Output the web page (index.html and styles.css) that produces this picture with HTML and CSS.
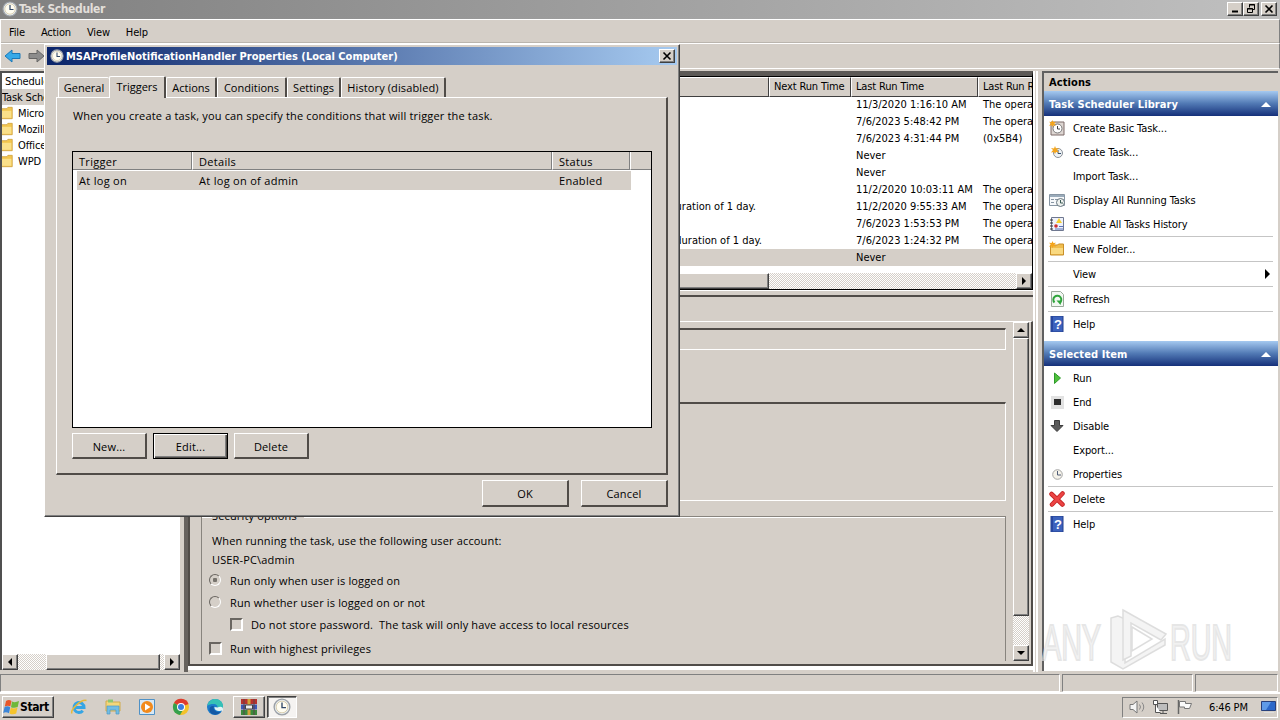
FILE: index.html
```html
<!DOCTYPE html>
<html lang="en">
<head>
    <meta charset="UTF-8">
    <meta name="viewport" content="width=device-width, initial-scale=1.0">
    <title>Task Scheduler</title>
    <link rel="stylesheet" href="styles.css">
</head>
<body>

<!-- Shared icons -->
<svg class="sprite" width="0" height="0">
    <symbol id="clock" viewBox="0 0 16 16">
        <circle cx="8" cy="8" r="7" fill="#e9eef2" stroke="#9ba0a6" stroke-width="1.2"/>
        <circle cx="8" cy="8" r="5.2" fill="#fffdf2" stroke="#c9b98c" stroke-width=".6"/>
        <path d="M8 4v4.500h3.500" fill="none" stroke="#2f4668" stroke-width="1.2"/>
    </symbol>
    <symbol id="folder" viewBox="0 0 16 16">
        <path d="M0 3h8l1-1.500h5v13H0z" fill="#f2c64f" stroke="#c99a32" stroke-width=".8"/>
        <path d="M0 5.500h13v8H0z" fill="#fae08a"/>
    </symbol>
    <symbol id="help" viewBox="0 0 16 16">
        <path d="M2 0h12v16H2z" fill="#3c62bd" stroke="#233f8c"/>
        <path d="M2 0h2v16H2z" fill="#2747a0"/>
        <text x="5" y="13" class="help-mark">?</text>
    </symbol>
    <symbol id="star" viewBox="0 0 8 8">
        <path d="M4 0l1 2.400L8 2 6 4l2 2.500L5 6 4 8 3 6 0 6.500 2 4 0 2l3 .4z" fill="#f4a51c"/>
    </symbol>
</svg>

<!-- Main window -->
<div class="window">
    <div class="title-bar">
        <svg class="icon"><use href="#clock"/></svg>
        <span class="title">Task Scheduler</span>
        <div class="win-buttons">
            <span class="win-btn"><svg width="12" height="10"><path d="M3 7.500h6" stroke="#000" stroke-width="2"/></svg></span>
            <span class="win-btn"><svg width="12" height="10"><path d="M4.500 3.500V.5h5v5h-2M4 1h6M2.500 4.500h5v4h-5zM2 5h6" fill="none" stroke="#000"/></svg></span>
            <span class="win-btn last"><svg width="12" height="10"><path d="M2.500 1.500l7 7M9.500 1.500l-7 7" stroke="#000" stroke-width="1.600"/></svg></span>
        </div>
    </div>

    <div class="menu-bar">
        <span>File</span><span>Action</span><span>View</span><span>Help</span>
    </div>

    <div class="tool-bar">
        <svg width="18" height="16"><path d="M1 8l7-6v3.500h8v5H8V14z" fill="#36a9e8" stroke="#1b78b8"/></svg>
        <svg width="18" height="16"><path d="M17 8l-7-6v3.500H2v5h8V14z" fill="#8c8c8c" stroke="#666"/></svg>
    </div>

    <div class="content">
        <!-- Folder tree -->
        <div class="tree">
            <div class="tree-rows">
                <div class="tree-row root">Scheduler</div>
                <div class="tree-row selected">Task Sche</div>
                <div class="tree-row"><svg class="icon"><use href="#folder"/></svg>Micro</div>
                <div class="tree-row"><svg class="icon"><use href="#folder"/></svg>Mozill</div>
                <div class="tree-row"><svg class="icon"><use href="#folder"/></svg>Office</div>
                <div class="tree-row"><svg class="icon"><use href="#folder"/></svg>WPD</div>
            </div>
            <div class="scroll-h">
                <span class="scroll-btn"><i class="arrow left"></i></span>
                <span class="thumb tree-thumb"></span>
                <span class="scroll-btn end"><i class="arrow right"></i></span>
            </div>
        </div>

        <!-- Task list and details -->
        <div class="middle">
            <div class="task-list">
                <div class="task-row head"><span></span><span>Next Run Time</span><span>Last Run Time</span><span>Last Run Result</span></div>
                <div class="task-row"><span></span><span></span><span>11/3/2020 1:16:10 AM</span><span>The operation</span></div>
                <div class="task-row"><span></span><span></span><span>7/6/2023 5:48:42 PM</span><span>The operation</span></div>
                <div class="task-row"><span></span><span></span><span>7/6/2023 4:31:44 PM</span><span>(0x5B4)</span></div>
                <div class="task-row"><span></span><span></span><span>Never</span><span></span></div>
                <div class="task-row"><span></span><span></span><span>Never</span><span></span></div>
                <div class="task-row"><span></span><span></span><span>11/2/2020 10:03:11 AM</span><span>The operation</span></div>
                <div class="task-row"><span class="trigger short">duration of 1 day.</span><span></span><span>11/2/2020 9:55:33 AM</span><span>The operation</span></div>
                <div class="task-row"><span></span><span></span><span>7/6/2023 1:53:53 PM</span><span>The operation</span></div>
                <div class="task-row"><span class="trigger">duration of 1 day.</span><span></span><span>7/6/2023 1:24:32 PM</span><span>The operation</span></div>
                <div class="task-row selected"><span></span><span></span><span>Never</span><span></span></div>
                <div class="scroll-h">
                    <span class="thumb list-thumb"></span>
                    <span class="scroll-btn end"><i class="arrow right"></i></span>
                </div>
            </div>

            <div class="details">
                <div class="details-page">
                    <div class="form">
                        <div class="group name-group"></div>
                        <div class="group desc-group"></div>
                        <div class="group security">
                            <div class="legend">Security options</div>
                            <div class="line">When running the task, use the following user account:</div>
                            <div class="line account">USER-PC\admin</div>
                            <div class="option"><i class="radio checked"></i>Run only when user is logged on</div>
                            <div class="option"><i class="radio"></i>Run whether user is logged on or not</div>
                            <div class="option nested"><i class="check"></i>Do not store password.&nbsp; The task will only have access to local resources</div>
                            <div class="option privileges"><i class="check"></i>Run with highest privileges</div>
                        </div>
                    </div>
                    <div class="scroll-v">
                        <span class="scroll-btn"><i class="arrow up"></i></span>
                        <span class="thumb details-thumb"></span>
                        <span class="scroll-btn end"><i class="arrow down"></i></span>
                    </div>
                </div>
            </div>
        </div>

        <!-- Actions pane -->
        <div class="actions">
            <div class="actions-title">Actions</div>
            <div class="actions-head">Task Scheduler Library<i class="arrow up"></i></div>
            <div class="action">
                <svg class="icon" viewBox="0 0 16 16"><path d="M2 2h13v13H2z" fill="#ddd6d2" stroke="#7d6b68"/><circle cx="8.500" cy="8.500" r="4.500" fill="#fff" stroke="#777"/><path d="M8.500 6v3H11" fill="none" stroke="#444"/><use href="#star" width="7" height="7"/></svg>
                Create Basic Task...
            </div>
            <div class="action">
                <svg class="icon" viewBox="0 0 16 16"><circle cx="9" cy="9" r="4.500" fill="#eef2f5" stroke="#8a9098"/><path d="M9 6v3.500h3" fill="none" stroke="#34506f"/><use href="#star" x="2" y="2" width="8" height="8"/></svg>
                Create Task...
            </div>
            <div class="action"><i class="icon"></i>Import Task...</div>
            <div class="action">
                <svg class="icon" viewBox="0 0 16 16"><path d="M.5 2.500h15v11H.5z" fill="#f6f8fa" stroke="#8795a3"/><path d="M1 3h14v2H1z" fill="#9aabba"/><path d="M2 7.500h3M6 7.500h4M2 10.500h3" stroke="#8795a3"/><circle cx="11.500" cy="10.500" r="4" fill="#eef1ee" stroke="#66757f"/><path d="M11.500 8v3H14" fill="none" stroke="#3a5a54"/></svg>
                Display All Running Tasks
            </div>
            <div class="action">
                <svg class="icon" viewBox="0 0 16 16"><path d="M2.500 1.500h12v13h-12z" fill="#eef1fa" stroke="#6f7890"/><path d="M1 4h3M1 7h3M1 10h3M1 13h3" stroke="#333"/><path d="M10 2l3 5H7z" fill="#f5cf2d"/><circle cx="7" cy="10" r="1.800" fill="#cf3030"/><path d="M10 10.500h4M6 13h8" stroke="#5b73b8"/></svg>
                Enable All Tasks History
            </div>
            <hr>
            <div class="action">
                <svg class="icon" viewBox="0 0 16 16"><path d="M1.500 4h7l1-1h5v11h-13z" fill="#f0bd4e" stroke="#c88f2a"/><path d="M2 7h12v6H2z" fill="#f9d980"/><use href="#star" width="7" height="7"/></svg>
                New Folder...
            </div>
            <hr>
            <div class="action"><i class="icon"></i>View<i class="arrow right"></i></div>
            <hr>
            <div class="action">
                <svg class="icon" viewBox="0 0 16 16"><path d="M2.500.5h9l3 3v12h-12z" fill="#f2f7f2" stroke="#9aa89a"/><path d="M5.500 11.500a4 4 0 1 1 5 .5" fill="none" stroke="#2ea43a" stroke-width="2"/><path d="M7.500 9.500l5 0-1 4.500z" fill="#2ea43a"/></svg>
                Refresh
            </div>
            <hr>
            <div class="action"><svg class="icon"><use href="#help"/></svg>Help</div>

            <div class="actions-head second">Selected Item<i class="arrow up"></i></div>
            <div class="action"><svg class="icon" viewBox="0 0 16 16"><path d="M5.500 3l6 5-6 5.500z" fill="#4fc03c" stroke="#2e9a2a"/></svg>Run</div>
            <div class="action"><svg class="icon" viewBox="0 0 16 16"><path d="M2 2h13v13H2z" fill="#e2e2e2"/><path d="M5 5h7v6H5z" fill="#2d2d2d"/></svg>End</div>
            <div class="action"><svg class="icon" viewBox="0 0 16 16"><path d="M5.500 2.500h5v5h3.500l-6 6-6-6h3.500z" fill="#5c5c5c" stroke="#3d3d3d"/></svg>Disable</div>
            <div class="action"><i class="icon"></i>Export...</div>
            <div class="action"><svg class="icon" viewBox="0 0 16 16"><circle cx="8.500" cy="8.500" r="4.800" fill="#f6f3ea" stroke="#a5a5a5"/><path d="M8.500 5v4H12" fill="none" stroke="#4f5c78"/></svg>Properties</div>
            <hr>
            <div class="action"><svg class="icon" viewBox="0 0 16 16"><path d="M2.500 3l11 10.500M13.500 2.500L3 13.500" stroke="#c42424" stroke-width="4.500" stroke-linecap="round"/><path d="M2.500 3L13.500 13.500M13.500 2.500L3 13.500" stroke="#ec4444" stroke-width="2.800" stroke-linecap="round"/></svg>Delete</div>
            <hr>
            <div class="action"><svg class="icon"><use href="#help"/></svg>Help</div>
        </div>
    </div>

    <div class="status-bar"><span></span><span></span><span></span></div>
</div>

<!-- Taskbar -->
<div class="taskbar">
    <div class="start">
        <svg width="17" height="16"><path d="M3 2q3-2 5.500 0L7.300 7.500Q5 6 1.800 7.500z" fill="#e8572a"/><path d="M9 2.500q3 1.500 7-.5l-1.300 6q-3.500 1.500-6.700.2z" fill="#6fb83a"/><path d="M1.600 8q3-1.500 5.600.3l-1.200 6q-3-2-5.800-.3z" fill="#3d86d8"/><path d="M7.800 8.800q3 1.500 6.700-.2l-1.300 6q-3.500 1.500-6.700-.2z" fill="#f6c42c"/></svg>
        Start
    </div>
    <div class="quick">
        <svg viewBox="0 0 18 18"><path d="M4.500 9.500h9.500a5 5 0 1 0-1.200 3.300" fill="none" stroke="#35a5e4" stroke-width="3"/><path d="M2 15.500C0 12 11 1 16.500 2.500" fill="none" stroke="#e6b93a" stroke-width="1.500"/></svg>
        <svg viewBox="0 0 18 18"><path d="M2 3h6l1 1h7v9H2z" fill="#f3d77a" stroke="#d1ab4a"/><path d="M4 1.500h5v3H4z" fill="#8cc672"/><path d="M3 8h12v8h-3v-4H6v4H3z" fill="#72bde3" stroke="#4a98c6" stroke-width=".7"/></svg>
        <svg viewBox="0 0 18 18"><path d="M1.500 1.500h15v15h-15z" fill="#d7e8f5" stroke="#4f91c6"/><circle cx="9" cy="9" r="6" fill="#f28a1c"/><path d="M7 5.500l5.500 3.500L7 12.500z" fill="#fff"/></svg>
        <svg viewBox="0 0 18 18"><circle cx="9" cy="9" r="8" fill="#f3c22b"/><path d="M9 9L2 5A8 8 0 0 1 16.500 6z" fill="#de3b2f"/><path d="M9 9L2 5a8 8 0 0 0 6 12l3.500-6z" fill="#35a04d"/><circle cx="9" cy="9" r="4" fill="#fff"/><circle cx="9" cy="9" r="3" fill="#3b7de0"/></svg>
        <svg viewBox="0 0 18 18"><circle cx="9" cy="9" r="8" fill="#1c7ccb"/><path d="M1.500 8C2 3 6 1 9 1c5 0 8 3.500 8 7 0 3-2 4.500-5 4-1.500-.3-1-1-.5-2 .5-2-1-4-4-4C5 6 2.500 6.500 1.500 8z" fill="#35c1b6"/><path d="M8 8c-1.500 3 1 6.500 6.500 6C11 18.500 4 17 3.500 12 3.300 9 5 7.500 8 8z" fill="#1459a5"/><path d="M8.500 9c-.5 3 3 5 7 3.500l1 1c2-5-2-5.500-5-4z" fill="#e3f3f5"/></svg>
    </div>
    <div class="task-btn">
        <svg viewBox="0 0 18 18"><path d="M1 1h16v5H1z" fill="#b8322e"/><path d="M1 6.500h16v5H1z" fill="#3b58b8"/><path d="M1 12h16v5H1z" fill="#3a8a3e"/><path d="M7.500 1h3v16h-3z" fill="#d0a43a"/><path d="M5.500 7h7v4h-7z" fill="#eee" stroke="#444"/><path d="M4 1v16M14 1v16" stroke="#5b4248"/></svg>
    </div>
    <div class="task-btn pressed"><svg viewBox="0 0 16 16"><use href="#clock"/></svg></div>
    <div class="tray">
        <svg width="18" height="16"><path d="M2 5.500h3L9 2v12L5 10.500H2z" fill="#f4f4f4" stroke="#777"/><path d="M11.500 5.500q2 2.500 0 5M14 3.500q3.500 4.500 0 9" fill="none" stroke="#888"/></svg>
        <svg width="18" height="16"><path d="M5.500 4.500h10v7h-10z" fill="#bdbdbd" stroke="#555"/><path d="M1.500 1.500h4v4h-4zM3.500 5.500v8h5M8 14.500h7M11 12v2" fill="#fff" stroke="#555"/></svg>
        <svg width="18" height="16"><path d="M2.500 1v14" stroke="#666" stroke-width="1.500"/><path d="M3.500 2.500h6v2h6l-2 5h-5v-1.500h-5z" fill="#fafafa" stroke="#777"/></svg>
        <span class="time">6:46 PM</span>
        <svg class="desktop" width="16" height="14"><path d="M.5 1.500h14v9H.5z" fill="#2c68c9" stroke="#27407c"/><path d="M1 2h9L5 10H1z" fill="#5f9be8"/><path d="M3 12.500h10" stroke="#ddd"/></svg>
    </div>
</div>

<!-- Properties dialog -->
<div class="dialog">
    <div class="dialog-title">
        <svg class="icon"><use href="#clock"/></svg>
        <span>MSAProfileNotificationHandler Properties (Local Computer)</span>
        <span class="win-btn"><svg width="12" height="10"><path d="M2.500 1.500l7 7M9.500 1.500l-7 7" stroke="#000" stroke-width="1.600"/></svg></span>
    </div>
    <div class="tabs">
        <span class="tab general">General</span>
        <span class="tab triggers active">Triggers</span>
        <span class="tab tab-actions">Actions</span>
        <span class="tab conditions">Conditions</span>
        <span class="tab settings">Settings</span>
        <span class="tab history">History (disabled)</span>
    </div>
    <div class="tab-page">
        <p>When you create a task, you can specify the conditions that will trigger the task.</p>
        <div class="triggers-table">
            <div class="trigger-row head"><span>Trigger</span><span>Details</span><span>Status</span><span></span></div>
            <div class="trigger-row"><span>At log on</span><span>At log on of admin</span><span>Enabled</span></div>
        </div>
        <div class="buttons">
            <span class="btn">New...</span>
            <span class="btn default">Edit...</span>
            <span class="btn">Delete</span>
        </div>
    </div>
    <div class="dialog-buttons">
        <span class="btn">OK</span>
        <span class="btn">Cancel</span>
    </div>
</div>

<!-- Watermark -->
<svg class="watermark" width="200" height="66">
    <g class="mark-text">
        <text x="3" y="53" textLength="59" lengthAdjust="spacingAndGlyphs">ANY</text>
        <text x="131" y="53" textLength="62" lengthAdjust="spacingAndGlyphs">RUN</text>
    </g>
    <g class="mark-logo">
        <path d="M79 9l-7 2v44l12 7 42-24v-6L86 56V12z"/>
        <path d="M84 3l43 24-5 6-30-17v33l-8 4z"/>
        <path class="mark-play" d="M93 20l20 12-20 12z"/>
    </g>
</svg>

</body>
</html>
```
FILE: styles.css
```css
/* General Styling */
* {
    box-sizing: border-box;
}

body {
    width: 1280px;
    height: 720px;
    margin: 0;
    overflow: hidden;
    background-color: #d5cfc8;
    color: #000;
    font-family: "DejaVu Sans Condensed", "DejaVu Sans", sans-serif;
    font-stretch: condensed;
    font-size: 11px;
    letter-spacing: -0.15px;
    white-space: nowrap;
}

svg {
    display: block;
    flex: none;
}

.sprite {
    display: none;
}

.icon {
    width: 16px;
    height: 16px;
    flex: none;
}

.help-mark {
    font: bold 13px "Liberation Sans", sans-serif;
    fill: #fff;
}

/* Main window */
.window {
    height: 693px;
    display: flex;
    flex-direction: column;
}

.title-bar {
    height: 19px;
    padding: 0 3px 1px 2px;
    display: flex;
    align-items: center;
    background: linear-gradient(to right, #808080, #c0c0c0);
}

.title {
    margin-left: 1px;
    flex: 1;
    color: #e2dfda;
    font-size: 12px;
    font-weight: bold;
    letter-spacing: -0.4px;
}

.win-buttons {
    display: flex;
}

.win-btn {
    width: 16px;
    height: 14px;
    display: flex;
    align-items: center;
    justify-content: center;
    background-color: #d5cfc8;
    border: 1px solid;
    border-color: #fff #404040 #404040 #fff;
    box-shadow: inset -1px -1px #808080;
}

.win-btn.last {
    margin-left: 2px;
}

.menu-bar {
    height: 25px;
    padding: 2px 0 0 8px;
    display: flex;
    align-items: center;
    gap: 16px;
    border: 1px solid #fff;
    border-right-color: #808080;
    box-shadow: inset 0 -1px #bab5ae;
}

.tool-bar {
    height: 25px;
    padding: 0 3px;
    display: flex;
    align-items: center;
    gap: 5px;
    border: 1px solid #fff;
    border-top: none;
    border-right-color: #808080;
}

.content {
    height: 603px;
    padding: 2px 2px 0 0;
    display: flex;
}

/* Scroll bars */
.scroll-h,
.scroll-v {
    display: flex;
    background: repeating-conic-gradient(#fff 0 25%, #d5cfc8 0 50%) 0 0 / 2px 2px;
}

.scroll-h {
    height: 16px;
}

.scroll-v {
    width: 16px;
    flex-direction: column;
}

.scroll-btn,
.thumb {
    background-color: #d5cfc8;
    border: 1px solid;
    border-color: #fff #404040 #404040 #fff;
    box-shadow: inset -1px -1px #808080;
}

.scroll-btn {
    width: 16px;
    height: 16px;
    display: flex;
    align-items: center;
    justify-content: center;
}

.scroll-h .end {
    margin-left: auto;
}

.scroll-v .end {
    margin-top: auto;
}

.tree-thumb {
    width: 114px;
    margin-left: 28px;
}

.list-thumb {
    width: 579px;
}

.details-thumb {
    height: 278px;
}

.arrow {
    border: 4px solid transparent;
}

.arrow.left {
    border-left-width: 0;
    border-right-color: #000;
}

.arrow.right {
    border-right-width: 0;
    border-left-color: #000;
}

.arrow.up {
    border-top-width: 0;
    border-bottom-color: #000;
}

.arrow.down {
    border-bottom-width: 0;
    border-top-color: #000;
}

/* Folder tree */
.tree {
    width: 181px;
    margin-bottom: 2px;
    display: flex;
    flex-direction: column;
    background-color: #fff;
    border: solid #505050;
    border-width: 2px 0 0 2px;
    border-right: 1px solid #d5cfc8;
}

.tree-rows {
    flex: 1;
    overflow: hidden;
}

.tree-row {
    height: 16px;
    display: flex;
    align-items: center;
    gap: 4px;
}

.tree-row .icon {
    width: 14px;
    margin-left: -2px;
}

.tree-row.root {
    padding-left: 3px;
}

.tree-row.selected,
.task-row.selected {
    background-color: #d5cfc8;
}

/* Task list */
.middle {
    width: 854px;
    margin-left: 3px;
    padding-bottom: 6px;
    display: flex;
    flex-direction: column;
    border-left: 4px solid #66625e;
    border-right: 5px double #fff;
}

.task-list {
    height: 219px;
    display: flex;
    flex-direction: column;
    background-color: #fff;
    border: 1px solid #000;
    border-top: 5px solid #5c5956;
    border-left: 2px solid #505050;
    box-shadow: inset 0 1px #000;
    padding-top: 1px;
    overflow: hidden;
}

.task-row {
    height: 17px;
    flex: none;
    display: grid;
    grid-template-columns: 579px 82px 127px 100px;
    align-items: center;
    letter-spacing: 0;
}

.task-row span {
    padding-left: 5px;
}

.task-row.head {
    height: 18px;
    align-items: stretch;
    margin-bottom: 1px;
    letter-spacing: -0.15px;
}

.task-row.head span {
    line-height: 18px;
    padding-left: 4px;
    background-color: #d5cfc8;
    border: 1px solid;
    border-color: #fff #404040 #404040 #fff;
}

.task-row .trigger {
    text-align: right;
    padding-right: 7px;
}

.task-row .short {
    padding-right: 13px;
}

.task-list .scroll-h {
    margin-top: auto;
}

/* Task details */
.details {
    flex: 1;
    margin: 5px 0 0 0;
    padding-top: 24px;
    border: 2px solid #504c48;
    border-right: none;
    box-shadow: 0 -4px #d5cfc8, 0 -5px #fff, 0 2px #fff, 0 4px #fff;
}

.details-page {
    height: 343px;
    padding: 0 2px 3px 11px;
    display: flex;
    justify-content: space-between;
    border-top: 1px solid #fff;
    border-right: 2px solid #504c48;
}

.form {
    width: 805px;
    padding-top: 6px;
    display: flex;
    flex-direction: column;
    overflow: hidden;
    font-family: "Open Sans", sans-serif;
    font-stretch: normal;
    letter-spacing: 0.15px;
}

.group {
    border: 1px solid #fff;
    border-top: 2px solid #504c48;
    flex: none;
}

.name-group {
    height: 22px;
}

.desc-group {
    height: 99px;
    margin-top: 52px;
}

.security {
    height: 150px;
    margin-top: 15px;
    padding-left: 10px;
    border: 1px solid #88847e;
    border-bottom: none;
    box-shadow: inset 0 1px #fff;
}

.legend {
    width: 92px;
    height: 14px;
    line-height: 14px;
    margin-top: -8px;
    background-color: #d5cfc8;
}

.line {
    height: 19px;
    line-height: 19px;
    margin-top: 8px;
}

.line.account {
    margin-top: 0;
}

.option {
    height: 22px;
    display: flex;
    align-items: center;
    gap: 8px;
}

.option.nested {
    padding-left: 21px;
    letter-spacing: 0.12px;
}

.option.privileges {
    margin-top: 2px;
}

.radio,
.check {
    width: 13px;
    height: 13px;
    border: 2px solid;
    border-color: #6a6661 #fff #fff #6a6661;
    margin-left: -3px;
}

.radio {
    border-width: 1px;
    width: 12px;
    height: 12px;
    border-radius: 50%;
    margin-right: 1px;
}

.radio.checked {
    background: radial-gradient(circle, #77736d 2px, transparent 2.5px);
}

/* Actions pane */
.actions {
    width: 236px;
    margin: 0 0 1px auto;
    background-color: #fff;
    border-left: 2px solid #606060;
    border-top: 2px solid #606060;
}

.actions-title {
    height: 18px;
    line-height: 20px;
    padding-left: 5px;
    background-color: #d5cfc8;
    font-weight: bold;
    letter-spacing: 0.1px;
}

.actions-head {
    height: 25px;
    padding: 1px 7px 0 5px;
    display: flex;
    align-items: center;
    justify-content: space-between;
    background: linear-gradient(#a5c9f0, #5179b4 50%, #15307a);
    color: #fff;
    font-weight: bold;
    letter-spacing: 0.1px;
}

.actions-head.second {
    margin-top: 5px;
}

.actions-head .arrow {
    border-width: 0 5px 5px;
    border-bottom-color: #fff;
}

.action {
    height: 24px;
    padding-left: 5px;
    display: flex;
    align-items: center;
    gap: 8px;
    letter-spacing: -0.1px;
}

.action .arrow {
    margin: 0 8px 0 auto;
    border-width: 5px 0 5px 5px;
}

.actions hr {
    height: 1px;
    margin: 0 5px 0 4px;
    border: none;
    background-color: #c5c5c5;
}

/* Status bar */
.status-bar {
    height: 21px;
    padding: 2px 2px 0 0;
    display: grid;
    grid-template-columns: 1060px 131px 83px;
    gap: 2px;
    border-bottom: 1px solid #fff;
}

.status-bar span {
    height: 18px;
    border: 1px solid;
    border-color: #808080 #fff #fff #808080;
}

/* Taskbar */
.taskbar {
    height: 27px;
    padding: 2px 2px 2px 2px;
    display: flex;
    align-items: center;
    border-top: 1px solid #fff;
}

.start {
    width: 52px;
    height: 22px;
    display: flex;
    align-items: center;
    border: 1px solid;
    border-color: #fff #404040 #404040 #fff;
    box-shadow: inset -1px -1px #808080;
    font-weight: bold;
    font-size: 12px;
    letter-spacing: -0.4px;
}

.quick {
    margin: 0 9px 0 16px;
    display: flex;
    gap: 16px;
}

.quick svg,
.task-btn svg {
    width: 18px;
    height: 18px;
}

.task-btn {
    width: 32px;
    height: 22px;
    display: flex;
    align-items: center;
    justify-content: center;
    border: 1px solid;
    border-color: #fff #404040 #404040 #fff;
    box-shadow: inset -1px -1px #808080;
}

.task-btn.pressed {
    width: 30px;
    margin-left: 2px;
    background-color: #f5f3f1;
    border-color: #404040 #fff #fff #404040;
    box-shadow: inset 1px 1px #808080;
}

.tray {
    width: 156px;
    height: 21px;
    margin-left: auto;
    padding-left: 5px;
    display: flex;
    align-items: center;
    gap: 6px;
    border: 1px solid;
    border-color: #808080 #fff #fff #808080;
}

.time {
    margin-left: 9px;
    flex: 1;
}

/* Properties dialog */
.dialog {
    position: absolute;
    left: 44px;
    top: 44px;
    width: 636px;
    height: 473px;
    padding: 2px;
    display: flex;
    flex-direction: column;
    background-color: #d5cfc8;
    border: 1px solid;
    border-color: #fff #404040 #404040 #fff;
    box-shadow: inset -1px -1px #808080;
    font-family: "Open Sans", sans-serif;
    font-stretch: normal;
    letter-spacing: 0.17px;
}

.dialog-title {
    height: 18px;
    padding: 0 2px 0 3px;
    display: flex;
    align-items: center;
    gap: 2px;
    background: linear-gradient(to right, #0a246a, #a6caf0);
    color: #fff;
    font-family: "DejaVu Sans Condensed", "DejaVu Sans", sans-serif;
    font-stretch: condensed;
    font-weight: bold;
    letter-spacing: 0;
}

.dialog-title .icon {
    width: 14px;
    height: 14px;
}

.dialog-title .win-btn {
    margin-left: auto;
}

.tabs {
    height: 22px;
    margin: 10px 0 0 11px;
    display: flex;
    align-items: flex-end;
    letter-spacing: 0;
}

.tab {
    height: 20px;
    line-height: 19px;
    text-align: center;
    border: solid;
    border-width: 1px 2px 0 1px;
    border-color: #fff #504c48 #fff #fff;
    border-radius: 2px 2px 0 0;
}

.tab.active {
    height: 22px;
    position: relative;
    top: 1px;
    background-color: #d5cfc8;
}

.general {
    width: 51px;
    border-right: none;
}

.triggers {
    width: 57px;
}

.tab-actions {
    width: 51px;
}

.conditions {
    width: 70px;
}

.settings {
    width: 54px;
}

.history {
    width: 105px;
    letter-spacing: 0.12px;
}

.tab-page {
    width: 612px;
    height: 378px;
    margin-left: 9px;
    padding: 10px 15px 0;
    border: solid;
    border-width: 1px 2px 2px 1px;
    border-color: #fff #504c48 #504c48 #fff;
}

.tab-page p {
    height: 16px;
    margin: 0 0 27px 1px;
    line-height: 16px;
}

.triggers-table {
    width: 580px;
    height: 277px;
    background-color: #fff;
    border: 1px solid #000;
}

.trigger-row {
    width: 554px;
    height: 19px;
    margin: 1px 0 0 4px;
    display: grid;
    grid-template-columns: 115px 360px 79px;
    line-height: 19px;
    background-color: #d5cfc8;
    letter-spacing: 0.3px;
}

.trigger-row span {
    padding-left: 7px;
}

.trigger-row span:first-child {
    padding-left: 2px;
}

.trigger-row.head {
    width: 578px;
    height: 18px;
    margin: 0;
    grid-template-columns: 119px 360px 78px 21px;
    line-height: 19px;
}

.trigger-row.head span {
    height: 18px;
    border: solid;
    border-width: 0 1px 1px 1px;
    border-color: #808080 #808080 #808080 #fff;
    padding-left: 6px;
}

.trigger-row.head span:first-child {
    border-left: none;
}

.trigger-row.head span:last-child {
    border-right: none;
}

.buttons {
    margin-top: 5px;
    display: flex;
    gap: 6px;
}

.btn {
    width: 75px;
    height: 27px;
    line-height: 25px;
    text-align: center;
    border: solid;
    border-width: 1px 2px 2px 1px;
    border-color: #fff #504c48 #504c48 #fff;
}

.buttons .btn {
    height: 26px;
    line-height: 25px;
}

.btn.default {
    border: 1px solid #000;
    box-shadow: inset 1px 1px #fff, inset -1px -1px #504c48, inset -2px -2px #808080;
}

.dialog-buttons {
    margin: 5px 9px 0 0;
    display: flex;
    justify-content: flex-end;
    gap: 12px;
}

.dialog-buttons .btn {
    width: 87px;
}

/* Watermark */
.watermark {
    position: absolute;
    left: 1039px;
    top: 607px;
    opacity: 0.7;
}

.mark-text {
    font: 50px "Liberation Sans", sans-serif;
    fill: #ececec;
    stroke: #dcdcdc;
    stroke-width: 2;
}

.mark-logo {
    fill: #f0f0f0;
    stroke: #d0d0d0;
    stroke-width: 1.5;
}

.mark-play {
    fill: #fff;
}
```
